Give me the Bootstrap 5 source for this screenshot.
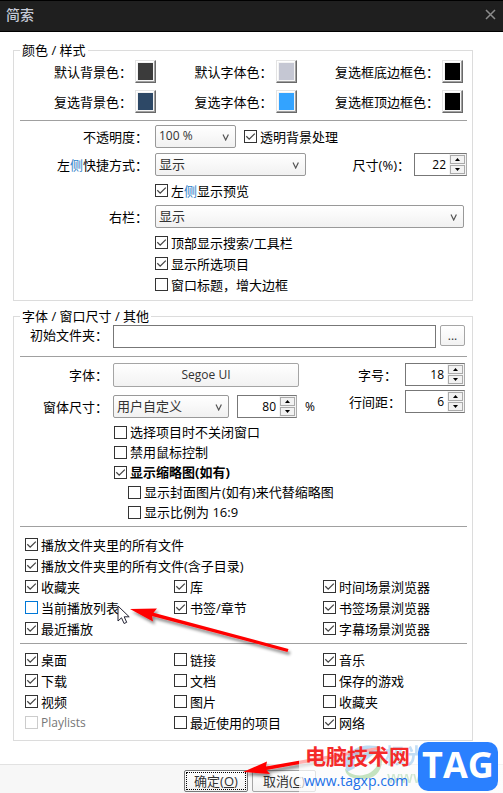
<!DOCTYPE html>
<html lang="zh-CN">
<head>
<meta charset="utf-8">
<meta name="viewport" content="width=device-width, initial-scale=1">
<title>简索</title>
<link rel="stylesheet" href="https://cdn.jsdelivr.net/npm/bootstrap@5.3.0/dist/css/bootstrap.min.css">
<style>
body{font-family:"Open Sans","Noto Sans CJK SC",sans-serif;font-size:13px;line-height:20px;color:#000;background:#fff}
.titlebar{height:32px;background:#1f1f1f;border:solid #000;border-width:1px 0;color:#c6cad8;font-size:14px;font-weight:500;padding:0 7px 3px 6px}
.titlebar button{background:none;border:0;padding:0;display:flex}
.group{border:1px solid #dcdcdc;margin:0 30px 0 13px}
.group>legend{float:none;width:auto;font-size:13px;line-height:18px;height:18px;margin:0 0 0 6px;padding:0 2px}
.first-group{margin-top:9px;padding-bottom:5px}
.second-group{margin-top:6px;padding-bottom:7px}
.rule{height:1px;border:0;opacity:1;background:#a0a0a0;margin:7px 5px 4px 6px}
.rule-fonts{margin:8px 5px 6px 6px}
.rule-play{margin:4px 5px 7px 6px}
.rule-dirs{margin:4px 5px 5px 6px}
label{white-space:nowrap}
.swatches{padding:1px 9px 0 40px;row-gap:7px}
.swatch{appearance:none;width:21px;height:23px;margin-left:3px;padding:2px;background:#f4f4f4;border:1px solid;border-color:#e3e3e3 #696969 #696969 #e3e3e3;box-shadow:inset -1px -1px #a0a0a0,inset 1px 1px #fff}
.swatch::-webkit-color-swatch-wrapper{padding:0}
.swatch::-webkit-color-swatch{border:0;border-radius:0}
.line{height:23px;margin-bottom:5px}
.side-label{width:134px;text-align:right;margin-right:7px;flex:none}
.font-label{width:94px;text-align:right;margin-right:5px;flex:none}
.line-end{padding-right:5px}
.font-end{padding-right:7px}
.pick{appearance:none;height:23px;border:1px solid #999;border-radius:2px;color:#333;padding:0 24px 1px 3px;font-size:13px;line-height:20px;background:url("data:image/svg+xml,%3Csvg xmlns='http://www.w3.org/2000/svg' width='8' height='7'%3E%3Cpath d='M1 .5 3.7 6 6.4.5' fill='none' stroke='%23555' stroke-width='1.2'/%3E%3C/svg%3E") no-repeat right 5px top 8px,linear-gradient(#fff,#f1f1f1)}
.latin{font-size:12px}
.opacity-pick{width:81px}
.left-pick{width:151px}
.push{border:1px solid #a5a5a5;border-radius:2px;background:linear-gradient(#fff,#f2f2f2);color:#333;font-size:12px;line-height:20px;padding:0}
.check-line{display:flex;align-items:center;height:21px}
.tight .check-line{height:20px}
.form-check-input{width:13px;height:13px;margin:0 3px 0 0;flex:none;border:1px solid #333;background-color:#fff;print-color-adjust:exact}
.form-check-input[type=checkbox]{border-radius:0}
.form-check-input:checked{background-color:#fff;border-color:#333}
.form-check-input:checked[type=checkbox]{background-image:url("data:image/svg+xml,%3Csvg xmlns='http://www.w3.org/2000/svg' viewBox='0 0 11 11'%3E%3Cpath d='M1.3 5.3 4.2 8.2 9.8 2.6' fill='none' stroke='%23444' stroke-width='1.3'/%3E%3C/svg%3E")}
.form-check-input.hot{border-color:#0078d7}
.form-check-input:disabled,.form-check-input:disabled~label{opacity:1}
.form-check-input:disabled{border-color:#ccc}
.form-check-input:disabled~label{color:#777;font-size:12px}
.opts{padding-left:141px}
.opts-fonts{padding-left:100px}
.sub{padding-left:14px}
.play{padding-left:11px}
.tri{display:grid;grid-template-columns:1fr 1fr 1fr;padding-left:11px}
.spin{display:flex;height:23px;border:1px solid;border-color:#777 #aaa #777 #777;background:#fff}
.spin input{width:34px;flex:1;min-width:0;border:0;padding:0 3px 0 0;text-align:right;font-size:12px;line-height:20px;appearance:textfield;background:none;outline:0}
.spin input::-webkit-inner-spin-button{display:none}
.spin span{display:flex;flex-direction:column;gap:1px;padding:1px;background:#f4f4f4;width:17px}
.spin button{flex:1;border:1px solid #aaa;background:#f2f2f2;padding:0;display:flex;align-items:center;justify-content:center}
.spin-s{width:53px}
.spin-m{width:60px}
.field{height:23px;border:1px solid #777;min-width:0;padding:0 3px}
.browse{width:25px;height:21px}
.font-btn{height:24px;width:186px}
.size-pick{width:116px}
.blue-glyph{color:#2f80c8}
.actions{margin-top:23px;border-top:1px solid #e2e2e2;background:#f7f7f7;height:29px;padding:5px 0 0 184px}
.actions .push{width:64px;height:22px;font-size:13px}
.actions .default-btn{border-color:#777;outline:1px dotted #000;outline-offset:-3px}
.overlay{position:absolute;pointer-events:none}
.arrow-list{left:110px;top:598px}
.arrow-ok{left:236px;top:742px}
.haze{left:299px;top:742px;right:0;height:51px;background:linear-gradient(90deg,#ffffffb0,#ffffff99)}
.swirl{left:341px;top:743px}
.ghost-name{left:385px;top:742px;font-size:21px;line-height:26px;font-weight:700;color:#2b8ad8;opacity:.28;white-space:nowrap}
.ghost-url{left:387px;top:767px;font-size:16px;line-height:20px;font-weight:600;color:#52ad58;opacity:.25}
.site-name{left:305px;top:743px;font-size:21px;line-height:26px;font-weight:700;color:#f52a2a;white-space:nowrap}
.site-url{left:304px;top:771px;font-size:14px;line-height:20px;color:#2070e8}
.tag-logo{left:418px;top:742px;width:80px;height:49px;border-radius:10px;background:#2a80ff;color:#fff;font:700 36px/46px "Open Sans",sans-serif;text-align:center}
</style>
</head>
<body>
<div class="position-relative overflow-hidden">
<header class="titlebar d-flex justify-content-between align-items-center">
  <span>简索</span>
  <button type="button" aria-label="关闭"><svg width="11" height="11" viewBox="0 0 11 11"><path d="M1 1l9 9M10 1l-9 9" stroke="#8b8b8b" stroke-width="1.5"/></svg></button>
</header>
<form>
<fieldset class="group first-group">
  <legend>颜色 / 样式</legend>
  <div class="swatches d-flex flex-column">
    <div class="d-flex justify-content-between">
      <div class="d-flex align-items-center"><label for="c1">默认背景色：</label><input class="swatch" type="color" id="c1" value="#3b3b3b"></div>
      <div class="d-flex align-items-center"><label for="c2">默认字体色：</label><input class="swatch" type="color" id="c2" value="#c5c7d3"></div>
      <div class="d-flex align-items-center"><label for="c3">复选框底边框色：</label><input class="swatch" type="color" id="c3" value="#000000"></div>
    </div>
    <div class="d-flex justify-content-between">
      <div class="d-flex align-items-center"><label for="c4">复选背景色：</label><input class="swatch" type="color" id="c4" value="#2d4866"></div>
      <div class="d-flex align-items-center"><label for="c5">复选字体色：</label><input class="swatch" type="color" id="c5" value="#33a3ff"></div>
      <div class="d-flex align-items-center"><label for="c6">复选框顶边框色：</label><input class="swatch" type="color" id="c6" value="#000000"></div>
    </div>
  </div>
  <hr class="rule">
  <div class="line d-flex align-items-center">
    <label class="side-label" for="opacity">不透明度：</label>
    <select class="pick latin opacity-pick" id="opacity"><option>100 %</option></select>
    <div class="check-line ms-2"><input class="form-check-input" type="checkbox" id="k1" checked><label for="k1">透明背景处理</label></div>
  </div>
  <div class="line line-end d-flex align-items-center mb-1">
    <label class="side-label" for="left">左<span class="blue-glyph">侧</span>快捷方式：</label>
    <select class="pick left-pick" id="left"><option>显示</option></select>
    <label class="ms-auto me-1" for="pct">尺寸(%)：</label>
    <div class="spin spin-s"><input type="number" id="pct" value="22"><span><button type="button" aria-label="增加"><svg width="5" height="3"><path d="M0 3h5L2.500 0z"/></svg></button><button type="button" aria-label="减少"><svg width="5" height="3"><path d="M0 0h5L2.500 3z"/></svg></button></span></div>
  </div>
  <div class="opts"><div class="check-line"><input class="form-check-input" type="checkbox" id="k2" checked><label for="k2">左<span class="blue-glyph">侧</span>显示预览</label></div></div>
  <div class="line d-flex align-items-center mt-1 mb-1 pe-2">
    <label class="side-label" for="right">右栏：</label>
    <select class="pick flex-grow-1" id="right"><option>显示</option></select>
  </div>
  <div class="opts">
    <div class="check-line"><input class="form-check-input" type="checkbox" id="k3" checked><label for="k3">顶部显示搜索/工具栏</label></div>
    <div class="check-line"><input class="form-check-input" type="checkbox" id="k4" checked><label for="k4">显示所选项目</label></div>
    <div class="check-line"><input class="form-check-input" type="checkbox" id="k5"><label for="k5">窗口标题，增大边框</label></div>
  </div>
</fieldset>

<fieldset class="group second-group">
  <legend>字体 / 窗口尺寸 / 其他</legend>
  <div class="d-flex align-items-start font-end">
    <label class="font-label" for="folder">初始文件夹：</label>
    <input class="field flex-grow-1" type="text" id="folder">
    <button type="button" class="push browse ms-1">...</button>
  </div>
  <hr class="rule rule-fonts">
  <div class="d-flex justify-content-between font-end">
    <div>
      <div class="d-flex align-items-center mb-1"><label class="font-label" for="face">字体：</label><button type="button" class="push font-btn" id="face">Segoe UI</button></div>
      <div class="d-flex align-items-center pt-1"><label class="font-label" for="winsize">窗体尺寸：</label>
        <select class="pick size-pick" id="winsize"><option>用户自定义</option></select>
        <div class="spin spin-m ms-2"><input type="number" id="ratio" aria-label="窗体百分比" value="80"><span><button type="button" aria-label="增加"><svg width="5" height="3"><path d="M0 3h5L2.500 0z"/></svg></button><button type="button" aria-label="减少"><svg width="5" height="3"><path d="M0 0h5L2.500 3z"/></svg></button></span></div>
        <label class="latin ms-2" for="ratio">%</label></div>
    </div>
    <div>
      <div class="d-flex align-items-center justify-content-end mb-1"><label class="me-2" for="fsize">字号：</label><div class="spin spin-m"><input type="number" id="fsize" value="18"><span><button type="button" aria-label="增加"><svg width="5" height="3"><path d="M0 3h5L2.500 0z"/></svg></button><button type="button" aria-label="减少"><svg width="5" height="3"><path d="M0 0h5L2.500 3z"/></svg></button></span></div></div>
      <div class="d-flex align-items-center justify-content-end"><label class="me-1" for="gap">行间距：</label><div class="spin spin-m"><input type="number" id="gap" value="6"><span><button type="button" aria-label="增加"><svg width="5" height="3"><path d="M0 3h5L2.500 0z"/></svg></button><button type="button" aria-label="减少"><svg width="5" height="3"><path d="M0 0h5L2.500 3z"/></svg></button></span></div></div>
    </div>
  </div>
  <div class="opts-fonts tight pt-1">
    <div class="check-line"><input class="form-check-input" type="checkbox" id="k6"><label for="k6">选择项目时不关闭窗口</label></div>
    <div class="check-line"><input class="form-check-input" type="checkbox" id="k7"><label for="k7">禁用鼠标控制</label></div>
    <div class="check-line"><input class="form-check-input" type="checkbox" id="k8" checked><label class="fw-bold" for="k8">显示缩略图(如有)</label></div>
    <div class="sub">
      <div class="check-line"><input class="form-check-input" type="checkbox" id="k9"><label for="k9">显示封面图片(如有)来代替缩略图</label></div>
      <div class="check-line"><input class="form-check-input" type="checkbox" id="k10"><label for="k10">显示比例为 16:9</label></div>
    </div>
  </div>
  <hr class="rule rule-play">
  <div class="play">
    <div class="check-line"><input class="form-check-input" type="checkbox" id="k11" checked><label for="k11">播放文件夹里的所有文件</label></div>
    <div class="check-line"><input class="form-check-input" type="checkbox" id="k12" checked><label for="k12">播放文件夹里的所有文件(含子目录)</label></div>
  </div>
  <div class="tri">
    <div class="check-line"><input class="form-check-input" type="checkbox" id="k13" checked><label for="k13">收藏夹</label></div>
    <div class="check-line"><input class="form-check-input" type="checkbox" id="k14" checked><label for="k14">库</label></div>
    <div class="check-line"><input class="form-check-input" type="checkbox" id="k15" checked><label for="k15">时间场景浏览器</label></div>
    <div class="check-line"><input class="form-check-input hot" type="checkbox" id="k16"><label for="k16">当前播放列表</label></div>
    <div class="check-line"><input class="form-check-input" type="checkbox" id="k17" checked><label for="k17">书签/章节</label></div>
    <div class="check-line"><input class="form-check-input" type="checkbox" id="k18" checked><label for="k18">书签场景浏览器</label></div>
    <div class="check-line"><input class="form-check-input" type="checkbox" id="k19" checked><label for="k19">最近播放</label></div>
    <div></div>
    <div class="check-line"><input class="form-check-input" type="checkbox" id="k20" checked><label for="k20">字幕场景浏览器</label></div>
  </div>
  <hr class="rule rule-dirs">
  <div class="tri">
    <div class="check-line"><input class="form-check-input" type="checkbox" id="k21" checked><label for="k21">桌面</label></div>
    <div class="check-line"><input class="form-check-input" type="checkbox" id="k22"><label for="k22">链接</label></div>
    <div class="check-line"><input class="form-check-input" type="checkbox" id="k23" checked><label for="k23">音乐</label></div>
    <div class="check-line"><input class="form-check-input" type="checkbox" id="k24" checked><label for="k24">下载</label></div>
    <div class="check-line"><input class="form-check-input" type="checkbox" id="k25"><label for="k25">文档</label></div>
    <div class="check-line"><input class="form-check-input" type="checkbox" id="k26"><label for="k26">保存的游戏</label></div>
    <div class="check-line"><input class="form-check-input" type="checkbox" id="k27" checked><label for="k27">视频</label></div>
    <div class="check-line"><input class="form-check-input" type="checkbox" id="k28"><label for="k28">图片</label></div>
    <div class="check-line"><input class="form-check-input" type="checkbox" id="k29"><label for="k29">收藏夹</label></div>
    <div class="check-line"><input class="form-check-input" type="checkbox" id="k30" disabled><label for="k30">Playlists</label></div>
    <div class="check-line"><input class="form-check-input" type="checkbox" id="k31"><label for="k31">最近使用的项目</label></div>
    <div class="check-line"><input class="form-check-input" type="checkbox" id="k32" checked><label for="k32">网络</label></div>
  </div>
</fieldset>
<footer class="actions d-flex gap-1">
  <button type="button" class="push default-btn">确定(<u>O</u>)</button>
  <button type="button" class="push">取消(<u>C</u>)</button>
</footer>
</form>

<svg class="overlay arrow-list" width="190" height="62" viewBox="110 598 190 62" aria-hidden="true">
  <defs><filter id="soft" x="-20%" y="-50%" width="140%" height="220%"><feDropShadow dx="2" dy="3" stdDeviation="1.500" flood-color="#000" flood-opacity=".45"/></filter></defs>
  <path d="M118 606v15l3.500-3.200 2.600 5.700 2.600-1.200-2.500-5.500h5z" fill="#fff" stroke="#223" stroke-width="1"/>
  <g filter="url(#soft)"><path d="M130 609l27-.5-3.500 4.200 135 36.200-1 3-135.500-36 1 5.600z" fill="#f00"/></g>
</svg>
<svg class="overlay arrow-ok" width="150" height="44" viewBox="236 742 150 44" aria-hidden="true">
  <g filter="url(#soft)"><path d="M243 772l24-10.500-1 5 114-20 .5 3-114 20.500 3.500 4z" fill="#f00"/></g>
</svg>
<div class="overlay haze"></div>
<svg class="overlay swirl" width="46" height="38" viewBox="0 0 46 38" aria-hidden="true">
  <path d="M6 29C-1 10 18-3 43 5 24 2 10 13 14 25z" fill="#7bb7e8" opacity=".5"/>
  <path d="M4 25c7 12 34 11 36-15 4 16-5 27-20 26C10 36 4 32 4 25z" fill="#8cca83" opacity=".5"/>
  <path d="M16 21c2-11 15-16 25-13-11 1-14 12-25 13z" fill="#7bb7e8" opacity=".45"/>
</svg>
<div class="overlay ghost-name">极光下载站</div>
<div class="overlay ghost-url">www.xz7.com</div>
<div class="overlay site-name">电脑技术网</div>
<div class="overlay site-url">www.tagxp.com</div>
<div class="overlay tag-logo">TAG</div>
</div>
<script src="https://cdn.jsdelivr.net/npm/bootstrap@5.3.0/dist/js/bootstrap.bundle.min.js"></script>
</body>
</html>
